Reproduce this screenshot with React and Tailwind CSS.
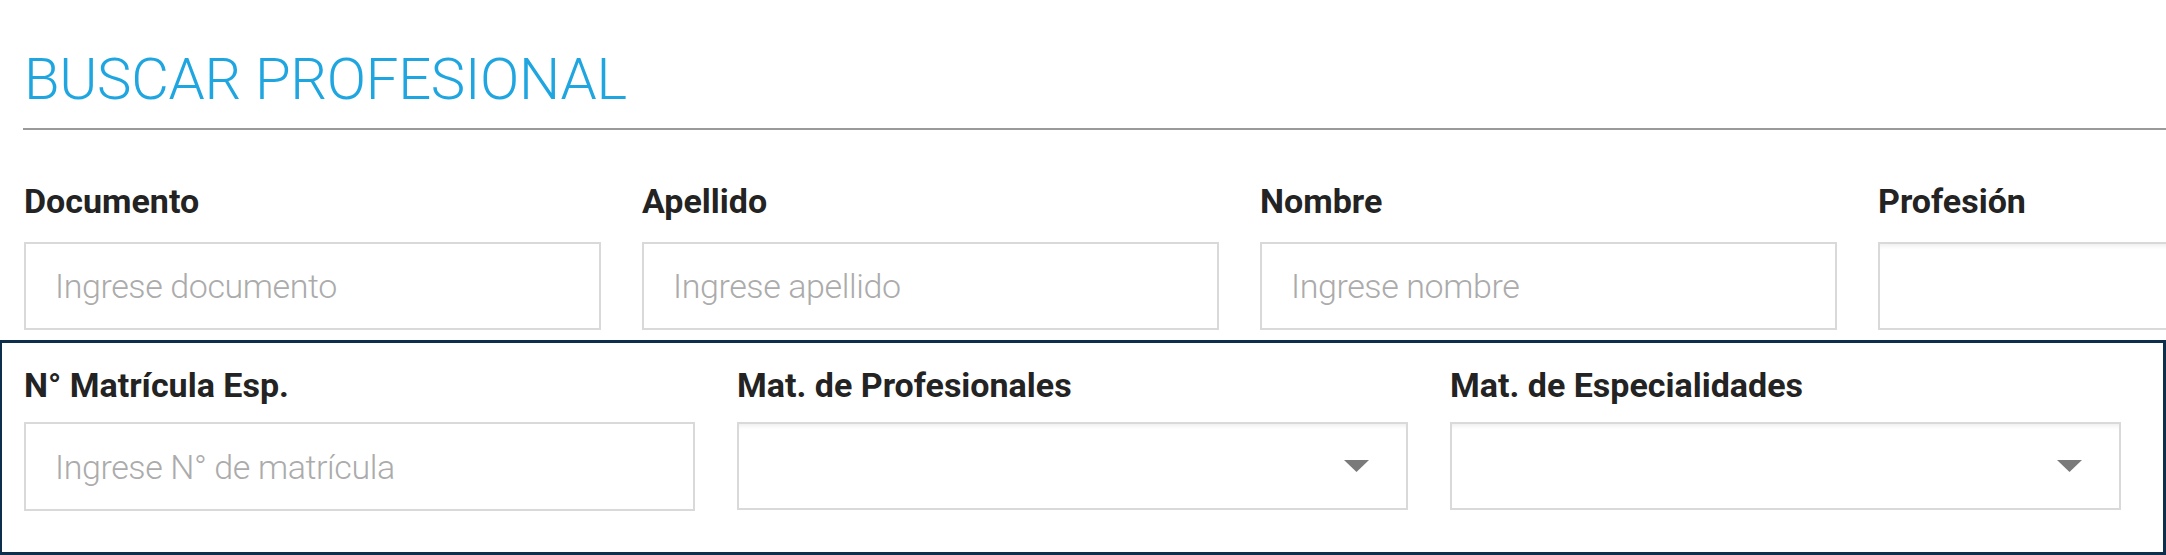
import React from "react";

const FONT = "font-[family-name:Roboto,sans-serif]";

const TextField = ({ label, placeholder }) => (
    <div className="flex flex-col">
        <label className="text-[34px] leading-[34px] font-bold text-[#232323] mb-[24px] whitespace-nowrap">
            {label}
        </label>
        <input
            type="text"
            placeholder={placeholder}
            className="h-[88px] w-full border-2 border-[#d9d9d9] bg-white px-[29px] text-[34px] font-light tracking-[-0.4px] text-[#444] placeholder:text-[#ababab] outline-none"
        />
    </div>
);

const SelectField = ({ label, gap = "mb-[24px]" }) => (
    <div className="flex flex-col">
        <label className={`text-[34px] leading-[34px] font-bold text-[#232323] whitespace-nowrap ${gap}`}>
            {label}
        </label>
        <div className="h-[88px] w-full border-2 border-[#d9d9d9] bg-white shadow-[inset_0_5px_4px_-3px_rgba(0,0,0,0.07)] flex items-center justify-end pr-[37px]">
            <svg width="25" height="12" viewBox="0 0 25 12">
                <polygon points="0,0 25,0 12.5,12" fill="#7a7a7a" />
            </svg>
        </div>
    </div>
);

export default function App() {
    return (
        <div className={`${FONT} w-[2166px] h-[555px] overflow-hidden bg-white`}>
            {/* Title */}
            <h1 className="mt-[50px] ml-[24px] text-[58px] leading-[58px] font-light text-[#1fa6e0] tracking-[-0.3px]">
                BUSCAR PROFESIONAL
            </h1>
            <div className="mt-[20px] ml-[23px] border-t-2 border-[#9a9a9a]" />

            {/* First row */}
            <div className="mt-[54px] ml-[24px] grid grid-cols-[repeat(4,577px)] gap-x-[41px]">
                <TextField label="Documento" placeholder="Ingrese documento" />
                <TextField label="Apellido" placeholder="Ingrese apellido" />
                <TextField label="Nombre" placeholder="Ingrese nombre" />
                <div className="flex flex-col">
                    <label className="text-[34px] leading-[34px] font-bold text-[#232323] mb-[24px]">
                        Profesión
                    </label>
                    <div className="h-[88px] w-full border-2 border-[#d9d9d9] bg-white shadow-[inset_0_5px_4px_-3px_rgba(0,0,0,0.07)]" />
                </div>
            </div>

            {/* Second row, highlighted */}
            <div className="mt-[10px] h-[215px] border-[3px] border-l-2 border-[#0d2f4b] pl-[22px] pr-[40px] pt-[25px]">
                <div className="grid grid-cols-[repeat(3,671px)] gap-x-[42px]">
                    <div className="flex flex-col">
                        <label className="text-[34px] leading-[34px] font-bold text-[#232323] mb-[20px] whitespace-nowrap">
                            N° Matrícula Esp.
                        </label>
                        <input
                            type="text"
                            placeholder="Ingrese N° de matrícula"
                            className="h-[89px] w-full border-2 border-[#d9d9d9] bg-white px-[29px] text-[34px] font-light tracking-[-0.4px] text-[#444] placeholder:text-[#ababab] outline-none"
                        />
                    </div>
                    <SelectField label="Mat. de Profesionales" gap="mb-[20px]" />
                    <SelectField label="Mat. de Especialidades" gap="mb-[20px]" />
                </div>
            </div>
        </div>
    );
}
